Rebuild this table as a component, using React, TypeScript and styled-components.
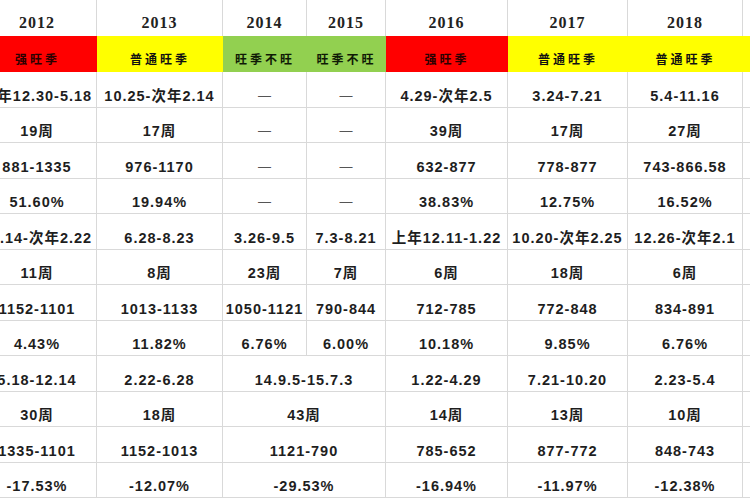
import React from "react";
import styled, { createGlobalStyle } from "styled-components";

const GlobalStyle = createGlobalStyle`
  html, body {
    margin: 0;
    padding: 0;
    background: #ffffff;
    overflow: hidden;
  }
  #root {
    width: 750px;
    height: 500px;
    overflow: hidden;
  }
`;

const LINE = "#d9d9d9";

const Sheet = styled.div`
  display: grid;
  grid-template-columns: 119px 126px 84px 79px 122px 120px 115px 120px;
  grid-template-rows: 36px 36px repeat(12, 35.5px);
  margin-left: -22px;
  width: max-content;
  color: #1c1c1c;
`;

const YearCell = styled.div`
  display: flex;
  align-items: flex-end;
  justify-content: center;
  box-sizing: border-box;
  border-right: 1px solid ${LINE};
  padding-bottom: 4px;
  font-family: "Liberation Serif", "DejaVu Serif", serif;
  font-weight: 700;
  font-size: 16px;
  line-height: 18px;
  letter-spacing: 1px;
  color: #222;
`;

const TagCell = styled.div<{ $bg: string; $fg?: string }>`
  display: flex;
  align-items: flex-end;
  justify-content: center;
  box-sizing: border-box;
  background: ${(p) => p.$bg};
  padding-bottom: 4px;
  white-space: nowrap;
  font-family: "Noto Sans CJK SC", "Liberation Sans", sans-serif;
  font-weight: 700;
  font-size: 12px;
  line-height: 18px;
  letter-spacing: 3px;
  color: ${(p) => p.$fg ?? "#111"};
`;

const DataCell = styled.div<{ $span?: number }>`
  grid-column: span ${(p) => p.$span ?? 1};
  display: flex;
  align-items: flex-end;
  justify-content: center;
  box-sizing: border-box;
  border-right: 1px solid ${LINE};
  border-bottom: 1px solid ${LINE};
  padding-bottom: 2px;
  white-space: nowrap;
  font-family: "Liberation Sans", "Noto Sans CJK SC", sans-serif;
  font-weight: 700;
  font-size: 14.5px;
  line-height: 18px;
  letter-spacing: 1px;
  color: #1e1e1e;
`;

const Dash = styled.span`
  font-weight: 400;
  font-size: 13px;
  color: #555;
  letter-spacing: 0;
`;

type Cell = { t: string; span?: number };

const years = ["2012", "2013", "2014", "2015", "2016", "2017", "2018", ""];

const tags: { t: string; bg: string; fg?: string }[] = [
  { t: "强旺季", bg: "#ff0000", fg: "#2a0000" },
  { t: "普通旺季", bg: "#ffff00" },
  { t: "旺季不旺", bg: "#92d050", fg: "#0f1a05" },
  { t: "旺季不旺", bg: "#92d050", fg: "#0f1a05" },
  { t: "强旺季", bg: "#ff0000", fg: "#2a0000" },
  { t: "普通旺季", bg: "#ffff00" },
  { t: "普通旺季", bg: "#ffff00" },
  { t: "", bg: "#ffff00" },
];

const D = "—";

const rows: Cell[][] = [
  [{ t: "上年12.30-5.18" }, { t: "10.25-次年2.14" }, { t: D }, { t: D }, { t: "4.29-次年2.5" }, { t: "3.24-7.21" }, { t: "5.4-11.16" }, { t: "" }],
  [{ t: "19周" }, { t: "17周" }, { t: D }, { t: D }, { t: "39周" }, { t: "17周" }, { t: "27周" }, { t: "" }],
  [{ t: "881-1335" }, { t: "976-1170" }, { t: D }, { t: D }, { t: "632-877" }, { t: "778-877" }, { t: "743-866.58" }, { t: "" }],
  [{ t: "51.60%" }, { t: "19.94%" }, { t: D }, { t: D }, { t: "38.83%" }, { t: "12.75%" }, { t: "16.52%" }, { t: "" }],
  [{ t: "12.14-次年2.22" }, { t: "6.28-8.23" }, { t: "3.26-9.5" }, { t: "7.3-8.21" }, { t: "上年12.11-1.22" }, { t: "10.20-次年2.25" }, { t: "12.26-次年2.1" }, { t: "" }],
  [{ t: "11周" }, { t: "8周" }, { t: "23周" }, { t: "7周" }, { t: "6周" }, { t: "18周" }, { t: "6周" }, { t: "" }],
  [{ t: "1152-1101" }, { t: "1013-1133" }, { t: "1050-1121" }, { t: "790-844" }, { t: "712-785" }, { t: "772-848" }, { t: "834-891" }, { t: "" }],
  [{ t: "4.43%" }, { t: "11.82%" }, { t: "6.76%" }, { t: "6.00%" }, { t: "10.18%" }, { t: "9.85%" }, { t: "6.76%" }, { t: "" }],
  [{ t: "5.18-12.14" }, { t: "2.22-6.28" }, { t: "14.9.5-15.7.3", span: 2 }, { t: "1.22-4.29" }, { t: "7.21-10.20" }, { t: "2.23-5.4" }, { t: "" }],
  [{ t: "30周" }, { t: "18周" }, { t: "43周", span: 2 }, { t: "14周" }, { t: "13周" }, { t: "10周" }, { t: "" }],
  [{ t: "1335-1101" }, { t: "1152-1013" }, { t: "1121-790", span: 2 }, { t: "785-652" }, { t: "877-772" }, { t: "848-743" }, { t: "" }],
  [{ t: "-17.53%" }, { t: "-12.07%" }, { t: "-29.53%", span: 2 }, { t: "-16.94%" }, { t: "-11.97%" }, { t: "-12.38%" }, { t: "" }],
];

export default function App() {
  return (
    <>
      <GlobalStyle />
      <Sheet>
        {years.map((y, i) => (
          <YearCell key={"y" + i}>{y}</YearCell>
        ))}

        {tags.map((g, i) => (
          <TagCell key={"g" + i} $bg={g.bg} $fg={g.fg}>
            {g.t}
          </TagCell>
        ))}

        {rows.map((r, ri) =>
          r.map((c, ci) => (
            <DataCell key={ri + "-" + ci} $span={c.span}>
              {c.t === D ? <Dash>{D}</Dash> : c.t}
            </DataCell>
          ))
        )}
      </Sheet>
    </>
  );
}
